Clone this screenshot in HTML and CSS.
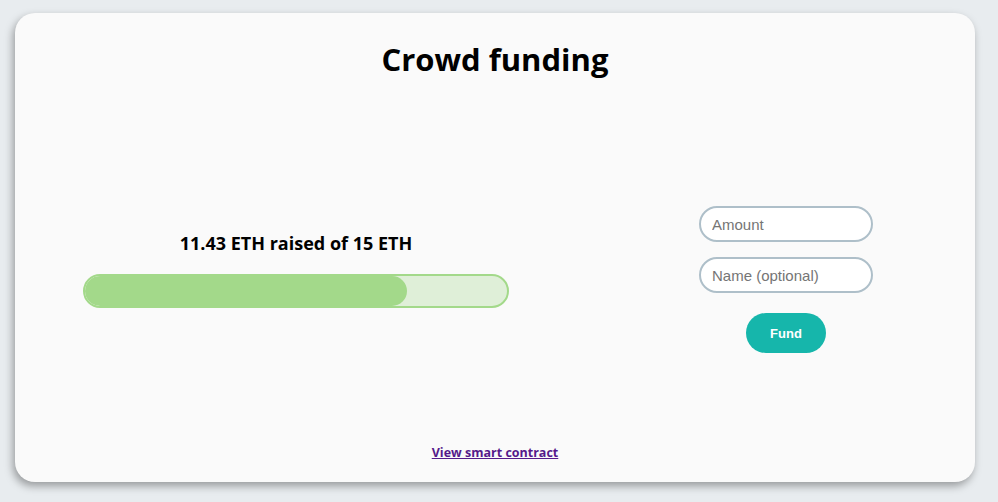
FILE: index.html
```html
<!DOCTYPE html>
<html>
<head>
<meta charset="utf-8">
<link rel="stylesheet" href="styles.css">
</head>
<body>
<div class="card">
  <h1 class="title">Crowd funding</h1>
  <div class="main">
    <div class="progress-col">
      <div class="raised">11.43 ETH raised of 15 ETH</div>
      <div class="bar"><div class="fill" style="width:76.2%"></div></div>
    </div>
    <div class="form-col">
      <input class="field" type="text" placeholder="Amount">
      <input class="field" type="text" placeholder="Name (optional)">
      <button class="fund">Fund</button>
    </div>
  </div>
  <div class="footer"><a class="link" href="#">View smart contract</a></div>
</div>
</body>
</html>
```
FILE: styles.css
```css
html, body { margin: 0; padding: 0; }
body {
  background: #e8ecef;
  width: 998px;
  height: 502px;
  overflow: hidden;
  font-family: "Open Sans", "Noto Sans", sans-serif;
}
.card {
  margin: 13px 0 0 15px;
  width: 960px;
  height: 469px;
  background: #fafafa;
  border-radius: 20px;
  box-shadow: -2px 4px 8px rgba(0,0,0,0.35);
  display: flex;
  flex-direction: column;
  box-sizing: border-box;
}
.title {
  margin: 26px 0 0 0;
  text-align: center;
  font-size: 31px;
  font-weight: 700;
  line-height: 40px;
  color: #000;
}
.main {
  flex: 1;
  display: flex;
  align-items: center;
  padding-top: 16px;
}
.progress-col {
  margin-left: 68px;
  width: 426px;
  display: flex;
  flex-direction: column;
  align-items: center;
  margin-top: 4px;
}
.raised {
  font-size: 18px;
  font-weight: 700;
  line-height: 24px;
  margin-bottom: 19px;
  color: #000;
}
.bar {
  width: 426px;
  height: 34px;
  box-sizing: border-box;
  border: 2px solid #a3d98a;
  border-radius: 17px;
  background: #dfefd8;
  overflow: hidden;
}
.fill {
  height: 100%;
  background: #a3d98a;
  border-radius: 15px;
}
.form-col {
  margin-left: 190px;
  width: 174px;
  display: flex;
  flex-direction: column;
  align-items: center;
  margin-top: 24px;
}
.field {
  width: 174px;
  height: 36px;
  box-sizing: border-box;
  border: 2px solid #aebfc9;
  border-radius: 18px;
  background: #fff;
  padding: 0 11px;
  font-family: "Liberation Sans", Arial, sans-serif;
  font-size: 15px;
  margin-bottom: 15px;
  outline: none;
}
.field::placeholder { color: #757575; }
.fund {
  margin-top: 5px;
  width: 80px;
  height: 40px;
  border: none;
  border-radius: 20px;
  background: #16b6ab;
  color: #fff;
  font-family: "Liberation Sans", Arial, sans-serif;
  font-weight: 700;
  font-size: 13px;
}
.footer {
  text-align: center;
  padding-bottom: 20px;
}
.link {
  font-size: 12.5px;
  font-weight: 700;
  color: #551a8b;
  text-decoration: underline;
}
```
